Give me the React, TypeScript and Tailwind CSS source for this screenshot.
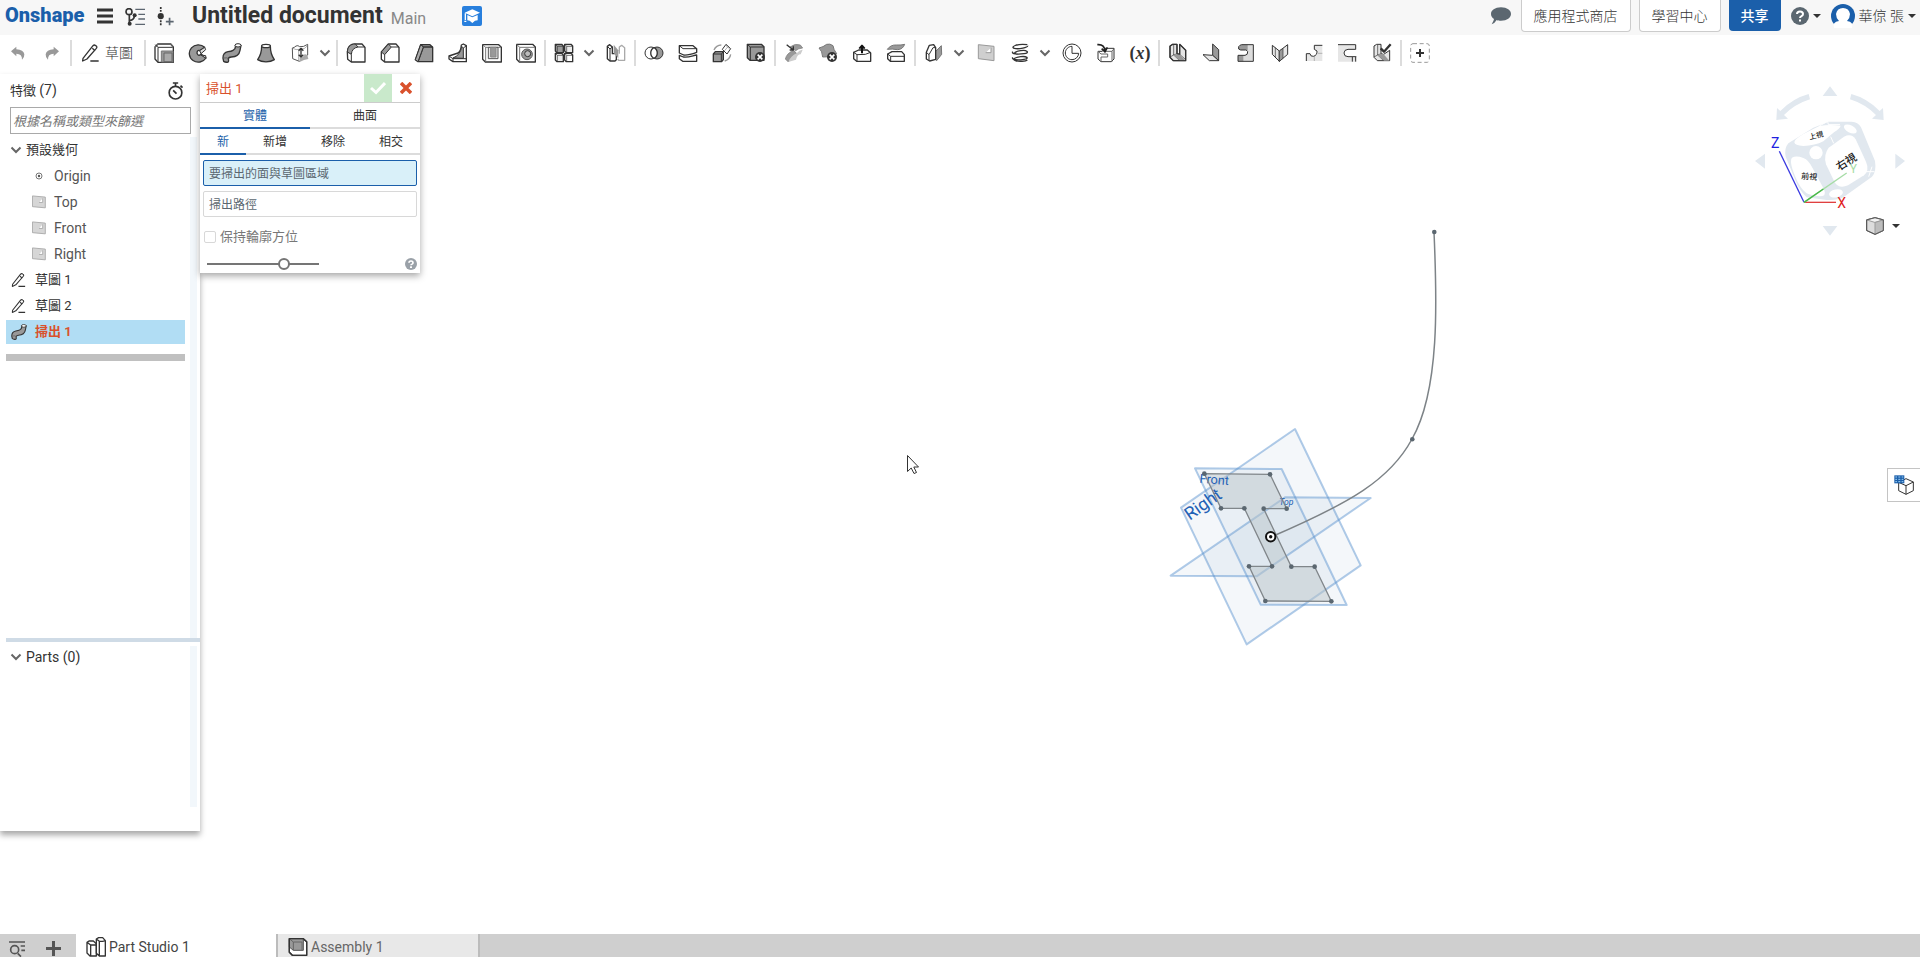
import React, { ReactNode } from 'react';

const D = '#333333';
const G = '#999999';
const L = '#e6e6e6';

function Glyph({ children, size = 'size-5', box = '0 0 60 60' }: { children: ReactNode; size?: string; box?: string }) {
  return (
    <svg viewBox={box} className={`${size} shrink-0`} fill="none" stroke={D} strokeWidth="4" strokeLinejoin="round" aria-hidden="true">
      {children}
    </svg>
  );
}

function RemoveBadge() {
  return (
    <>
      <circle cx="42" cy="42" r="15" fill={D} stroke="none" />
      <path d="M35 35l14 14M49 35L35 49" stroke="#fff" strokeWidth="5" />
    </>
  );
}

const pencil = (
  <>
    <path d="M6 46L36 8Q40 4 44 8Q50 11 46 16L18 48L5 54Z" fill="#fff" />
    <path d="M34 16l8 7M28 54h25" />
  </>
);

const sweep = (
  <>
    <path d="M40 7Q42 18 33 22Q28 25 18 26Q2 29 3 46L5 55Q11 59 18 57Q21 56 19 48Q19 43 28 42Q51 41 54 22L57 7Z" fill={G} />
    <ellipse cx="48" cy="7" rx="9" ry="5" fill="#fff" strokeWidth="3" />
    <path d="M19 47Q17 43 5 45" stroke="#666" strokeWidth="3" />
  </>
);

const plane = <path d="M7 5L54 10V53L7 47Z M29 29H45V14" fill="#cfcfcf" stroke={G} strokeWidth="3" />;

const icons: Record<string, ReactNode> = {
  extrude: (
    <>
      <path d="M3 12L12 3H50L58 12V58H12L3 48Z" fill="#fff" />
      <path d="M3 12L12 3H50L58 12" stroke="#666" />
      <path d="M12 13H56M12 13V57M4 5L12 13" strokeWidth="3" />
      <path d="M22 24H57V57H22Z" fill={G} stroke="#777" strokeWidth="3" />
      <path d="M30 30H54V56H30Z" fill="#aaa" stroke="#666" strokeWidth="3" />
    </>
  ),
  revolve: (
    <>
      <path d="M50 13A27 26 0 1 0 54 45L39 33Q32 42 27 31Q27 20 36 23Z" fill={G} />
      <path d="M50 13L53 20L39 32L35 23ZM39 36L53 38L54 46Z" fill="#ddd" strokeWidth="3" />
    </>
  ),
  sweep,
  loft: (
    <>
      <path d="M17 9C17 28 12 40 5 50C18 59 42 59 55 50C48 40 43 28 43 9Z" fill={G} />
      <ellipse cx="30" cy="9" rx="13" ry="5" fill="#fff" />
    </>
  ),
  thicken: (
    <>
      <path d="M7 15Q13 14 18 9Q24 6 29 11Q40 13 53 4V36L40 46L28 55L8 47Z" fill="#fff" stroke="#555" strokeWidth="3" />
      <path d="M8 16Q18 22 29 19Q44 20 53 8M26 20V54" strokeWidth="2" stroke="#888" />
      <path d="M29 43Q40 45 44 33L52 36L55 48L42 51L29 57Z" fill="#aaa" stroke="none" />
      <path d="M33 20V40M26 23l7-7 7 7M26 35l7 7 7-7" strokeWidth="4" />
    </>
  ),
  fillet: (
    <>
      <path d="M4 27C5 11 13 3 28 3H48L57 13V57H16L5 49Z" fill="#fff" />
      <path d="M4 27C5 11 13 3 28 3L36 12C24 14 17 21 16 34Z" fill={G} strokeWidth="3" />
      <path d="M16 34V57M36 12H57" strokeWidth="3" />
    </>
  ),
  chamfer: (
    <>
      <path d="M4 27L25 3H48L57 13V57H14L4 49Z" fill="#fff" />
      <path d="M4 27L25 3L34 12L14 35Z" fill={G} strokeWidth="3" />
      <path d="M14 35V57M34 12H57" strokeWidth="3" />
    </>
  ),
  draft: (
    <>
      <path d="M4 50L20 5H48L56 13V56H12Z" fill={G} />
      <path d="M12 56L28 12H56M20 5L28 12" />
      <path d="M4 50L20 5L28 12L12 56Z" fill="#aaa" strokeWidth="3" />
    </>
  ),
  rib: (
    <>
      <path d="M3 39L30 30Q39 24 40 6L46 3L55 8V56H15L3 48Z" fill="#fff" />
      <path d="M15 45Q38 36 41 10L46 15V46Z" fill={G} strokeWidth="3" />
      <path d="M46 15L54 9M4 40L15 47H54M15 47V56" strokeWidth="3" />
    </>
  ),
  shell: (
    <>
      <path d="M2 5H50L58 13V57H10L2 49Z" fill="#fff" />
      <path d="M2 5L11 13H57M11 13V56" strokeWidth="3" stroke="#777" />
      <path d="M19 13H48V47H19Z" fill={L} strokeWidth="3" stroke="#555" />
      <path d="M26 13H42V42H26Z" fill={G} stroke="#888" strokeWidth="3" />
    </>
  ),
  hole: (
    <>
      <path d="M2 4H50L58 12V57H10L2 49Z" fill="#fff" />
      <path d="M2 4L11 13H57M11 13V56" strokeWidth="3" stroke="#777" />
      <circle cx="33" cy="34" r="16" fill={G} stroke="#555" strokeWidth="3" />
      <circle cx="35" cy="32" r="9" fill="#bbb" strokeWidth="3" />
    </>
  ),
  pattern: (
    <>
      {[[3, 3], [31, 3], [3, 30], [31, 30]].map(([x, y], i) => (
        <g key={i} transform={`translate(${x} ${y})`}>
          <path d="M1 1H20L25 6V26H6L1 21Z" fill={i === 0 ? G : i === 3 ? '#fff' : '#ececec'} strokeWidth="4" />
          <path d="M1 1L7 7H25M7 7V25" strokeWidth="2" />
        </g>
      ))}
    </>
  ),
  mirror: (
    <>
      <path d="M4 10L11 5L19 12V32H31V50L27 54H12L4 47Z" fill="#fff" />
      <path d="M4 10L12 18V54M12 18L19 12" strokeWidth="3" />
      <path d="M40 32V12L47 7L56 14V52H38L35 48" fill="#fff" stroke="#aaa" />
      <path d="M23 5L37 22V46L23 30Z" fill={G} stroke="none" />
    </>
  ),
  boolean: (
    <>
      <circle cx="39" cy="30" r="18" fill={G} strokeWidth="3" />
      <circle cx="21" cy="30" r="18" fill="#fff" strokeWidth="3" />
      <path d="M30 14A18 18 0 0 1 30 46A18 18 0 0 1 30 14Z" fill="#fff" strokeWidth="4" />
    </>
  ),
  split: (
    <>
      <path d="M4 8H45L56 17V28C40 34 28 37 17 36L4 30Z" fill="#fff" />
      <path d="M4 37L16 42C32 44 44 38 56 36V55H14L4 47Z" fill="#fff" />
      <path d="M4 8L15 17H56" strokeWidth="3" />
    </>
  ),
  transform: (
    <>
      <path d="M4 33L10 26H34V50L29 56H4Z" fill={G} />
      <path d="M4 33H28V55M28 33L34 26" strokeWidth="3" />
      <path d="M42 4L56 17L45 33L31 19Z" fill="#fff" strokeWidth="3" />
      <path d="M42 4L46 13L56 17M46 13L37 24" stroke="#888" strokeWidth="2" />
      <path d="M6 21A25 25 0 0 1 28 6M56 34Q54 49 38 54" stroke={G} />
    </>
  ),
  deletePart: (
    <>
      <path d="M4 4H46L54 11V52H12L4 44Z" fill={G} />
      <path d="M4 4L13 12H54M13 12V52" strokeWidth="3" />
      <RemoveBadge />
    </>
  ),
  modifyFillet: (
    <>
      <path d="M18 12Q33 0 49 6L56 15Q43 16 35 23Z" fill={G} stroke="#777" strokeWidth="2" />
      <path d="M28 22L38 31Q20 42 13 57L4 48Q8 31 28 22Z" fill={G} stroke="#777" strokeWidth="2" />
      <path d="M38 31Q47 19 56 20L50 34Q40 34 36 50L13 57Q20 39 38 31Z" fill="#ccc" stroke="none" />
      <path d="M8 5L27 20M28 10V21H17" />
    </>
  ),
  deleteFace: (
    <>
      <path d="M3 15Q16 12 26 4Q36 1 45 8Q46 19 56 32L36 46Q26 39 14 42Q13 24 3 15Z" fill={G} stroke="#777" strokeWidth="3" />
      <RemoveBadge />
    </>
  ),
  moveFace: (
    <>
      <path d="M5 28L20 21H46L56 30V55H14L5 47Z" fill="#fff" />
      <path d="M5 28L15 35L40 34L56 28M15 35V55" strokeWidth="3" />
      <path d="M30 31V11M22 17L30 8L38 17" stroke="#111" strokeWidth="6" />
    </>
  ),
  replaceFace: (
    <>
      <path d="M4 19Q14 5 31 6Q46 7 56 4Q50 20 34 20Q19 17 4 19Z" fill={G} stroke="#777" strokeWidth="3" />
      <path d="M5 33L18 26H47L55 35V55H13L5 47Z" fill="#fff" />
      <path d="M5 33L14 40H55M14 40V55" strokeWidth="3" />
    </>
  ),
  offsetPlane: (
    <>
      <path d="M34 26L52 8L53 34L38 53L29 45Z" fill={G} stroke="#777" strokeWidth="3" />
      <path d="M7 28L16 7L29 5L35 14V49L17 54L7 48Z" fill="#fff" />
      <path d="M7 28L15 35L27 14H34M15 35V53" strokeWidth="3" />
    </>
  ),
  plane,
  helix: (
    <path d="M52 5C20 1 0 12 13 16S55 13 53 8M8 26C4 33 22 35 42 32S50 20 32 23S8 31 22 34M8 43C4 51 24 52 42 49S50 39 32 41S5 49 16 53S48 55 52 51" strokeWidth="4" />
  ),
  measure: (
    <>
      <circle cx="30" cy="30" r="27" fill="#fff" strokeWidth="3" />
      <path d="M30 10V31H50A20 20 0 0 1 30 50C19 50 10 41 10 30S19 10 30 10Z" fill="#fff" strokeWidth="3" />
    </>
  ),
  importPart: (
    <>
      <path d="M6 25H19L27 16H54V48L46 56H15L6 48Z" fill="#fff" strokeWidth="3" />
      <path d="M27 25H48V56M48 25L54 17M6 25L15 33H35V42H15V56" stroke="#666" strokeWidth="3" />
      <path d="M4 5Q25 3 27 24M17 17L27 27L34 13" stroke="#222" strokeWidth="5" />
    </>
  ),
  sheetModel: (
    <>
      <path d="M6 9L14 4H27V32L35 34V4L53 22V53H16L6 43Z" fill={L} />
      <path d="M17 6V36L27 32M6 42L17 36L35 53M35 34L53 50" strokeWidth="2" />
      <path d="M27 32L35 34L52 53H36L17 36Z" fill={G} stroke="none" />
      <path d="M6 9L14 4H27V32L35 34V4L53 22V53H16L6 43Z" strokeWidth="3" />
    </>
  ),
  flange: (
    <>
      <path d="M32 3L50 20V53L32 37Z" fill={G} strokeWidth="3" />
      <path d="M3 35L32 37L50 53H22Z" fill={L} strokeWidth="3" />
    </>
  ),
  hem: (
    <>
      <path d="M17 5H52V55H6V37H27Q36 36 35 26Q34 22 29 21H14Q5 20 8 11Q11 6 17 5Z" fill="#dcdcdc" stroke="none" />
      <path d="M17 5H35V21H14Q5 20 8 11ZM6 37H22V55H6Z" fill={G} stroke="none" />
      <path d="M17 5H52V55H6V37H27Q36 36 35 26Q34 22 29 21H14Q5 20 8 11Q11 6 17 5Z" strokeWidth="3" />
    </>
  ),
  bend: (
    <>
      <path d="M7 7L28 24V55L7 34Z" fill={L} strokeWidth="3" />
      <path d="M28 24L53 5V34L28 55Z" fill={L} strokeWidth="3" />
      <path d="M28 24L39 16V46L28 55Z" fill={G} strokeWidth="2" />
      <path d="M16 14V42" strokeWidth="2" />
    </>
  ),
  tab: (
    <>
      <path d="M7 54V32H18Q19 42 29 40Q40 37 40 25Q31 24 31 16V7H55V54Z" fill={L} stroke="none" />
      <path d="M31 40V54M42 31H55" stroke={G} strokeWidth="2" />
      <path d="M7 54V32H18Q19 41 28 40Q40 37 39 24L31 19V7H55" strokeWidth="3" />
    </>
  ),
  corner: (
    <>
      <path d="M0 5H55V20H30Q18 20 18 30Q18 41 30 41H55V56H0Z" fill={L} stroke="none" />
      <path d="M0 5H53V19H30Q18 20 18 30Q18 41 30 41H55M43 56V42M53 56V42" strokeWidth="3" />
    </>
  ),
  finish: (
    <>
      <path d="M6 9L14 4H27V32L35 34L53 22V53H16L6 43Z" fill={L} strokeWidth="3" />
      <path d="M17 6V36L27 32M6 42L17 36L35 53" strokeWidth="2" />
      <path d="M27 32L35 34L52 53H36L17 36Z" fill={G} stroke="none" />
      <path d="M26 16L36 26L56 4" strokeWidth="7" />
    </>
  ),
  custom: (
    <>
      <rect x="2" y="2" width="56" height="56" rx="7" stroke={G} strokeDasharray="12 8" strokeWidth="3" />
      <path d="M30 18V42M18 30H42" strokeWidth="6" />
    </>
  ),
};

const groups: string[][] = [
  ['extrude', 'revolve', 'sweep', 'loft', 'thicken', 'more'],
  ['fillet', 'chamfer', 'draft', 'rib', 'shell', 'hole'],
  ['pattern', 'more', 'mirror'],
  ['boolean', 'split', 'transform', 'deletePart'],
  ['modifyFillet', 'deleteFace', 'moveFace', 'replaceFace'],
  ['offsetPlane', 'more', 'plane', 'helix', 'more', 'measure', 'importPart', 'variable'],
  ['sheetModel', 'flange', 'hem', 'bend', 'tab', 'corner', 'finish'],
  ['custom'],
];

function Divider() {
  return <div className="mx-px h-[26px] w-0.5 shrink-0 bg-[#dcdcdc]" />;
}

function Chevron() {
  return (
    <svg viewBox="0 0 12 8" className="h-2 w-3 shrink-0" fill="none" stroke="#666" strokeWidth="2" aria-hidden="true">
      <path d="M1.5 1.5L6 6L10.5 1.5" />
    </svg>
  );
}

function Caret() {
  return (
    <svg viewBox="0 0 8 4" className="h-1 w-2 shrink-0" fill={D} aria-hidden="true">
      <path d="M0 0H8L4 4Z" />
    </svg>
  );
}

function Header() {
  return (
    <header className="flex h-[35px] shrink-0 items-center bg-[#f7f7f7] pl-[5px] pr-1">
      <a href="#" className="w-[92px] pb-1.5 text-[20px] leading-[26px] font-black text-[#1b5faa]">Onshape</a>
      <button aria-label="Menu" className="w-7 pb-1">
        <svg viewBox="0 0 16 16" className="size-4" stroke={D} strokeWidth="3" aria-hidden="true"><path d="M0 2H16M0 8H16M0 14H16" /></svg>
      </button>
      <button aria-label="Versions and history" className="w-8 pb-0.5">
        <svg viewBox="0 0 60 54" className="h-[18px] w-5" fill="none" stroke={D} strokeWidth="5" aria-hidden="true">
          <circle cx="12" cy="11" r="9" />
          <circle cx="14" cy="47" r="6" fill={D} stroke="none" />
          <circle cx="29" cy="22" r="6" fill={D} stroke="none" />
          <path d="M13 20V46M28 24Q28 35 14 38" />
          <path d="M31 4H60M40 19H60M40 33H60M31 49H60" stroke="#5c6670" strokeWidth="4" />
        </svg>
      </button>
      <button aria-label="Create version" className="w-[35px] pb-0.5">
        <svg viewBox="0 0 50 56" className="h-[19px] w-[17px]" fill="none" stroke={D} strokeWidth="5" aria-hidden="true">
          <path d="M11 0V14M11 39V56" strokeDasharray="6 3" />
          <circle cx="11" cy="27" r="9" fill={D} stroke="none" />
          <path d="M37 32V54M26 43H49" stroke="#5c6670" />
        </svg>
      </button>
      <h1 className="pb-1 text-[23px] leading-7 font-bold text-[#333]">Untitled document</h1>
      <span className="ml-2 pt-0.5 text-[16px] leading-5 text-[#888]">Main</span>
      <a href="#" aria-label="Education" className="ml-9 pb-1">
        <svg viewBox="0 0 60 60" className="size-5" aria-hidden="true">
          <rect width="60" height="60" rx="6" fill="#287fdd" />
          <path d="M8 20L31 10L54 20L31 31Z" fill="#fff" />
          <path d="M16 27L31 34L47 27V43L39 44L31 51L23 44L16 43Z" fill="#fff" />
          <path d="M10 22V42M7 46H13" stroke="#fff" strokeWidth="4" />
        </svg>
      </a>
      <div className="ml-auto flex h-full items-start">
        <button aria-label="Comments" className="mr-2.5 mt-[7px]">
          <svg viewBox="0 0 60 52" className="h-[18px] w-5" fill="#5b6770" aria-hidden="true">
            <path d="M30 0C48 0 60 9 60 20S48 40 30 40C25 40 21 40 17 38Q11 48 2 51Q8 42 9 35C3 31 0 26 0 20C0 9 12 0 30 0Z" />
          </svg>
        </button>
        <a href="#" className="h-8 rounded-b border border-t-0 border-[#cccccc] bg-white px-3 text-sm leading-8 font-light text-[#333]">應用程式商店</a>
        <a href="#" className="ml-2 h-8 rounded-b border border-t-0 border-[#cccccc] bg-white px-3 text-sm leading-8 font-light text-[#333]">學習中心</a>
        <button className="ml-2 h-[31px] rounded-b bg-[#1b5faa] px-3 text-sm leading-8 font-medium text-white">共享</button>
        <button aria-label="Help" className="ml-2.5 flex h-8 items-center gap-1">
          <svg viewBox="0 0 18 18" className="size-[18px]" aria-hidden="true">
            <circle cx="9" cy="9" r="9" fill="#5b6770" />
            <path d="M6 7Q6 4.500 9 4.500T12 7Q12 8.300 10.500 9.200Q9 10 9 11" stroke="#fff" strokeWidth="2" fill="none" />
            <rect x="8" y="12.500" width="2" height="2" fill="#fff" />
          </svg>
          <Caret />
        </button>
        <button className="ml-2.5 flex h-8 items-center gap-1 text-sm font-light text-[#333]">
          <svg viewBox="0 0 24 24" className="size-6" aria-hidden="true">
            <circle cx="12" cy="12" r="12" fill="#1b5faa" />
            <path d="M3 24Q1 18 8 17Q5 14 5 10Q6 4 12 4T19 10Q19 14 16 17Q23 18 21 24Z" fill="#fff" />
          </svg>
          華倞 張
          <Caret />
        </button>
      </div>
    </header>
  );
}

function Toolbar() {
  return (
    <div role="toolbar" aria-label="Features" className="flex h-9 shrink-0 items-center bg-white pl-px">
      <button aria-label="Undo" className="flex w-[34px] justify-center">
        <svg viewBox="0 0 42 42" className="size-3.5" aria-hidden="true"><path d="M0 16L16 2V10Q38 11 40 25Q41 33 33 41Q34 23 16 23V31Z" fill={G} /></svg>
      </button>
      <button aria-label="Redo" className="flex w-[34px] justify-center">
        <svg viewBox="0 0 42 42" className="size-3.5" aria-hidden="true"><path d="M42 16L26 2V10Q4 11 2 25Q1 33 9 41Q8 23 26 23V31Z" fill={G} /></svg>
      </button>
      <Divider />
      <button className="flex w-[70px] items-center gap-1 pl-2 text-sm font-light text-[#333]">
        <Glyph>{pencil}</Glyph>草圖
      </button>
      {groups.map((group, g) => (
        <React.Fragment key={g}>
          <Divider />
          {group.map((name, i) =>
            name === 'more' ? (
              <button key={i} aria-label="More" className="flex w-[18px] shrink-0 justify-center pr-0.5"><Chevron /></button>
            ) : (
              <button key={i} aria-label={name} className="flex w-[34px] shrink-0 items-center justify-center">
                {name === 'variable' ? (
                  <span className="font-['Liberation_Serif',serif] text-[18px] leading-5 font-bold text-[#333]">(<i>x</i>)</span>
                ) : (
                  <Glyph>{icons[name]}</Glyph>
                )}
              </button>
            ),
          )}
        </React.Fragment>
      ))}
    </div>
  );
}

const features = [
  { icon: 'origin', label: 'Origin', nested: true },
  { icon: 'plane', label: 'Top', nested: true },
  { icon: 'plane', label: 'Front', nested: true },
  { icon: 'plane', label: 'Right', nested: true },
  { icon: 'sketch', label: '草圖 1', nested: false },
  { icon: 'sketch', label: '草圖 2', nested: false },
];

function FeatureIcon({ icon }: { icon: string }) {
  if (icon === 'origin') {
    return (
      <svg viewBox="0 0 14 14" className="size-3.5 shrink-0" fill="none" stroke="#777" aria-hidden="true">
        <circle cx="7" cy="7" r="3" /><circle cx="7" cy="7" r="1.200" fill="#555" stroke="none" />
      </svg>
    );
  }
  if (icon === 'plane') {
    return <Glyph size="size-3.5"><path d="M2 4L57 9V55L2 50Z M30 32H46V14" fill="#d6d6d6" stroke="#aaa" strokeWidth="4" /></Glyph>;
  }
  return <Glyph size="size-4">{pencil}</Glyph>;
}

function Sidebar() {
  return (
    <aside className="z-10 mt-[3px] mb-[103px] flex w-[200px] shrink-0 flex-col bg-white text-[14px] text-[#333] shadow-[0_4px_6px_rgba(0,0,0,0.35)]">
      <div className="flex h-8 items-center justify-between pl-2.5 pr-4">
        <h2 className="text-[13px]">特徵 <span className="text-[14px]">(7)</span></h2>
        <button aria-label="Rebuild times" className="pt-0.5">
          <svg viewBox="0 0 50 54" className="h-[18px] w-[17px]" fill="none" stroke={D} strokeWidth="5" aria-hidden="true">
            <circle cx="25" cy="32" r="19" />
            <path d="M17 3H33M25 3V13M40 11L46 17M18 25L28 35" />
          </svg>
        </button>
      </div>
      <div className="px-2.5 pt-px">
        <input aria-label="Filter" placeholder="根據名稱或類型來篩選" className="block h-[27px] w-[181px] border border-[#a9a9a9] bg-white px-0.5 font-['Noto_Sans_CJK_TC',sans-serif] text-[13px] italic outline-none placeholder:text-[#777]" />
      </div>
      <div className="mt-[3px] mr-[3px] flex min-h-0 flex-1 border-r-[7px] border-[#f2f7fb]">
        <ul className="flex-1">
          <li className="flex h-[26px] items-center gap-1 pl-2.5 text-[13px]"><Chevron />預設幾何</li>
          {features.map((f) => (
            <li key={f.label} className={f.nested ? 'flex h-[26px] items-center gap-2 pl-8 text-[#555]' : 'flex h-[26px] items-center gap-2 pl-[11px] text-[13px]'}>
              <FeatureIcon icon={f.icon} />{f.label}
            </li>
          ))}
          <li className="mt-px mr-[5px] ml-1.5 flex h-6 items-center gap-2 bg-[#b1ddf4] pl-[5px] text-[13px] font-bold text-[#d9512c]">
            <Glyph size="size-4">{sweep}</Glyph>掃出 1
          </li>
          <li aria-hidden="true" className="mt-2.5 mr-[5px] ml-1.5 h-[7px] bg-[#c0c0c0]" />
        </ul>
      </div>
      <div className="ml-1.5 h-1 bg-[#cfdbe6]" />
      <div className="mt-1 mr-[3px] mb-6 h-[161px] shrink-0 border-r-[7px] border-[#f2f7fb]">
        <h2 className="flex h-[22px] items-center gap-1 pl-2.5"><Chevron />Parts (0)</h2>
      </div>
    </aside>
  );
}

function SweepDialog() {
  const tab = 'text-center leading-6 pt-px border-b-2';
  return (
    <section aria-label="掃出 1" className="z-10 mt-[3px] h-[199px] w-[220px] shrink-0 bg-white text-[12px] text-[#333] shadow-[0_3px_7px_rgba(0,0,0,0.35)]">
      <div className="flex h-[29px] border-b border-[#cccccc]">
        <h2 className="flex-1 pl-1.5 text-[13px] leading-[29px] text-[#d9512c]">掃出 1</h2>
        <button aria-label="Accept" className="flex w-7 items-center justify-center bg-[#c9e9cb]">
          <svg viewBox="0 0 16 14" className="h-3.5 w-4" fill="none" stroke="#fff" strokeWidth="3" aria-hidden="true"><path d="M1 7L6 11.500L15 2" /></svg>
        </button>
        <button aria-label="Cancel" className="flex w-7 items-center justify-center">
          <svg viewBox="0 0 12 12" className="size-3" fill="none" stroke="#d9512c" strokeWidth="3.500" aria-hidden="true"><path d="M1 1L11 11M11 1L1 11" /></svg>
        </button>
      </div>
      <div role="tablist" className="flex h-[26px]">
        <button role="tab" aria-selected="true" className={`${tab} w-1/2 border-[#1b5faa] text-[#1b5faa]`}>實體</button>
        <button role="tab" className={`${tab} w-1/2 border-[#dcdcdc]`}>曲面</button>
      </div>
      <div role="tablist" className="flex h-[26px]">
        <button role="tab" aria-selected="true" className={`${tab} w-[46px] border-[#1b5faa] text-[#1b5faa]`}>新</button>
        <button role="tab" className={`${tab} flex-1 border-[#dcdcdc]`}>新增</button>
        <button role="tab" className={`${tab} flex-1 border-[#dcdcdc]`}>移除</button>
        <button role="tab" className={`${tab} flex-1 border-[#dcdcdc]`}>相交</button>
      </div>
      <div className="flex flex-col gap-[5px] px-[3px] pt-[5px]">
        <input aria-label="要掃出的面與草圖區域" placeholder="要掃出的面與草圖區域" className="h-[26px] rounded-xs border border-[#1b5faa] bg-[#d9f0f9] px-[5px] pt-0.5 outline-none placeholder:text-[#5b6770]" />
        <input aria-label="掃出路徑" placeholder="掃出路徑" className="h-[26px] rounded-xs border border-[#d8d8d8] px-[5px] pt-0.5 outline-none placeholder:text-[#5b6770]" />
      </div>
      <label className="mt-[11px] flex h-[18px] items-center gap-1 pl-1 text-[13px] text-[#777]">
        <input type="checkbox" className="size-3 appearance-none rounded-xs border border-[#d8d8d8] bg-white" />
        保持輪廓方位
      </label>
      <div className="flex h-[35px] items-center justify-between pl-[7px] pr-[3px]">
        <input
          type="range"
          aria-label="Opacity"
          defaultValue={71}
          className="h-0.5 w-28 appearance-none bg-[#757575] [&::-webkit-slider-thumb]:size-3 [&::-webkit-slider-thumb]:appearance-none [&::-webkit-slider-thumb]:rounded-full [&::-webkit-slider-thumb]:border-2 [&::-webkit-slider-thumb]:border-[#757575] [&::-webkit-slider-thumb]:bg-white"
        />
        <button aria-label="Help">
          <svg viewBox="0 0 18 18" className="size-3" aria-hidden="true">
            <circle cx="9" cy="9" r="9" fill="#9aa1a8" />
            <path d="M6 7Q6 4.500 9 4.500T12 7Q12 8.300 10.500 9.200Q9 10 9 11" stroke="#fff" strokeWidth="2.500" fill="none" />
            <rect x="7.500" y="12.500" width="3" height="2.500" fill="#fff" />
          </svg>
        </button>
      </div>
    </section>
  );
}

const vertices = [[163, 191], [360, 193], [410, 296], [341, 296], [424, 470], [494, 470], [544, 574], [346, 573], [297, 469], [366, 469], [283, 295], [213, 295]];
const profile = `M${vertices.map((v) => v.join(' ')).join('L')}Z`;

function Scene() {
  return (
    <svg viewBox="0 71 1920 863" preserveAspectRatio="xMidYMid slice" className="absolute inset-0 size-full" aria-hidden="true">
      <g transform="translate(1150 410) scale(0.333333)" strokeLinejoin="round">
        <g fill="#6a93b8" fillOpacity="0.07" stroke="#5a93cf" strokeOpacity="0.48" strokeWidth="6">
          <path d="M93 293L435 57L632 466L290 703Z" />
          <path d="M62 497L320 499L662 264L405 262Z" />
          <path d="M135 175L395 177L590 585L332 584Z" />
        </g>
        <path d={profile} fill="#bcc6ca" fillOpacity="0.5" />
        <g fill="#2361b5" fontFamily="Roboto, sans-serif">
          <text x="148" y="218" fontSize="38" transform="rotate(5 148 218)">Front</text>
          <text x="119" y="332" fontSize="53" transform="rotate(-35 119 332)">Right</text>
          <text x="388" y="286" fontSize="26" fontStyle="italic">Top</text>
        </g>
        <path d={profile} fill="none" stroke="#80868a" strokeWidth="4" />
        {vertices.map(([x, y]) => <circle key={`${x}-${y}`} cx={x} cy={y} r="7" fill="#5b6770" />)}
      </g>
      <path d="M1434 232C1437 300 1440 390 1412 439C1390 480 1350 503 1271 537" fill="none" stroke="#7d8387" strokeWidth="1.500" />
      <circle cx="1434.300" cy="232" r="2.300" fill="#5b6770" />
      <circle cx="1412.300" cy="439.300" r="2.300" fill="#5b6770" />
      <circle cx="1270.700" cy="536.700" r="4.700" fill="#fff" stroke="#111" strokeWidth="2" />
      <circle cx="1270.700" cy="536.700" r="1.700" fill="#111" />
      <path d="M907.500 455.500V471.500L911.200 468L914 473.500L916.500 472.500L913.800 467H918.500Z" fill="#fff" stroke="#333" />
    </svg>
  );
}

function ViewCube() {
  return (
    <div className="absolute top-3 right-2.5 w-40">
      <svg viewBox="870 249 480 468" className="h-[156px] w-40" fill="#e1e8ef" aria-hidden="true">
        <path d="M1110 259L1132 288H1088ZM1110 707L1088 678H1132ZM885 483L915 461V506ZM1335 483L1306 461V506Z" />
        <path d="M1046 282L1050 298Q1005 312 972 345L984 356L949 360L951 324L961 333Q998 295 1046 282Z" />
        <path d="M1174 282L1170 298Q1215 312 1248 345L1236 356L1271 360L1269 324L1259 333Q1222 295 1174 282Z" />
        <path d="M1105 365H1175Q1194 366 1203 382L1245 483Q1250 515 1236 530L1150 592Q1130 602 1100 600L1040 592Q1018 570 1008 545L977 470Q972 445 985 430L1060 383Z" />
        <g fill="#fff">
          <path d="M1078 378Q1108 372 1142 377Q1140 385 1122 397L1090 424Q1065 437 1030 438Q1004 437 1003 427Q1004 417 1030 402Z" />
          <path d="M996 473Q1008 466 1030 474Q1046 479 1058 505L1088 560Q1102 586 1087 588Q1065 590 1045 582Q1030 577 1013 546Q985 486 996 473Z" />
          <path d="M1106 443L1152 410Q1175 399 1187 418L1218 485Q1229 511 1212 526L1164 556Q1137 568 1124 547L1098 493Q1090 464 1106 443Z" />
          <circle cx="1068" cy="458" r="20" />
          <ellipse cx="1171" cy="387" rx="21" ry="11" transform="rotate(28 1171 387)" />
          <ellipse cx="1128" cy="580" rx="21" ry="12" transform="rotate(-12 1128 580)" />
        </g>
        <path d="M1078 378L1103 364L1105 374H1140M1215 515H1243M1236 500L1226 530M1112 410L1121 430" stroke="#fff" strokeWidth="3" fill="none" />
        <g fill="#222" fontFamily="'Noto Sans CJK TC', sans-serif">
          <text x="1137" y="513" fontSize="33" fontWeight="500" transform="rotate(-32 1137 513)">右視</text>
          <text x="1023" y="536" fontSize="24" fontWeight="500" transform="rotate(5 1023 536)">前視</text>
          <text x="1049" y="419" fontSize="22" fontWeight="500" transform="rotate(-14 1049 419)">上視</text>
        </g>
        <g fill="none" strokeWidth="4">
          <path d="M1032 607L958 454" stroke="#3a3ae0" />
          <path d="M1032 607H1128" stroke="#e04040" />
          <path d="M1032 607L1160 519" stroke="#a6dca6" />
          <path d="M1032 607L1090 567" stroke="#47b847" />
        </g>
        <g fontFamily="Roboto, sans-serif" fontSize="42">
          <text x="933" y="444" fill="#2020e0">Z</text>
          <text x="1132" y="623" fill="#e02020">X</text>
          <text x="1169" y="518" fill="#a6dca6" fontSize="36">Y</text>
        </g>
      </svg>
      <button aria-label="Shading" className="absolute right-2.5 bottom-1 flex items-center gap-2">
        <svg viewBox="0 0 56 56" className="size-[18px]" stroke="#555" strokeWidth="3" strokeLinejoin="round" aria-hidden="true">
          <path d="M2 9L28 2L54 9V42L28 54L2 42Z" fill="#ddd" />
          <path d="M2 9L28 17L54 9L28 2Z" fill="#f2f2f2" stroke="#999" />
          <path d="M28 17V54L54 42V9Z" fill="#bdbdbd" stroke="#999" />
          <path d="M2 9L28 2L54 9V42L28 54L2 42Z" fill="none" />
        </svg>
        <Caret />
      </button>
    </div>
  );
}

function TabBar() {
  return (
    <nav className="flex h-[23px] shrink-0 overflow-hidden bg-[#cfcfcf] text-[14px]">
      <button aria-label="Search tabs" className="flex w-[42px] pl-[9px] pt-[7px]">
        <svg viewBox="0 0 48 48" className="size-4" fill="none" stroke="#555" strokeWidth="5" aria-hidden="true">
          <path d="M0 3H48M35 15H48M37 28H48M26 37L36 47" /><circle cx="17" cy="26" r="12" />
        </svg>
      </button>
      <button aria-label="Insert tab" className="flex w-[34px] pl-1 pt-[7px]">
        <svg viewBox="0 0 15 15" className="size-[15px]" stroke="#555" strokeWidth="3" aria-hidden="true"><path d="M7.500 0V15M0 7.500H15" /></svg>
      </button>
      <a href="#" aria-current="page" className="flex w-[200px] items-center gap-[3px] bg-white pt-[3px] pl-2.5 text-[#444]">
        <Glyph>
          <path d="M3 16L9 12H22L31 20V57H12L3 48ZM3 16L14 24H30M14 24V56" fill="#fff" />
          <path d="M31 6L38 2H50L58 11V57H40L31 49ZM31 6L40 13H50L58 11M40 13V56" fill="#fff" />
        </Glyph>
        Part Studio 1
      </a>
      <a href="#" className="flex w-[204px] items-center gap-[3px] border-x-2 border-[#bcbcbc] bg-[#e8e8e8] pt-[3px] pl-2.5 text-[#666]">
        <Glyph>
          <path d="M4 5H46L56 14V55H13L4 46Z" fill="#fff" />
          <path d="M4 5H46V40H16L4 30Z" fill={G} stroke="#555" strokeWidth="3" />
          <path d="M4 5L16 15H42V40M16 15V40M46 5V15" stroke="#666" strokeWidth="3" />
          <path d="M4 5H46L56 14V55H13L4 46Z" />
        </Glyph>
        Assembly 1
      </a>
    </nav>
  );
}

export default function App() {
  return (
    <div className="flex h-screen flex-col overflow-hidden bg-white font-[Roboto,'Noto_Sans_CJK_TC',sans-serif]">
      <Header />
      <Toolbar />
      <main className="relative flex min-h-0 flex-1 items-stretch">
        <Scene />
        <Sidebar />
        <SweepDialog />
        <ViewCube />
        <button aria-label="Configuration" className="absolute top-[46%] right-0 flex h-[34px] w-[33px] items-center border border-r-0 border-[#c4c4c4] bg-white pl-1.5">
          <svg viewBox="0 0 60 60" className="size-5" fill="none" stroke={D} strokeWidth="3" strokeLinejoin="round" aria-hidden="true">
            <path d="M14 22L36 11L58 21V47L36 58L14 47ZM14 22L36 32L58 21M36 32V58" />
            <rect x="1" y="1" width="30" height="24" fill="#1b5faa" stroke="none" />
            <path d="M4 6H9M13 6H19M23 6H28M4 13H9M13 13H19M23 13H28M4 20H9M13 20H19M23 20H28" stroke="#9cd0f5" />
          </svg>
        </button>
      </main>
      <TabBar />
    </div>
  );
}
